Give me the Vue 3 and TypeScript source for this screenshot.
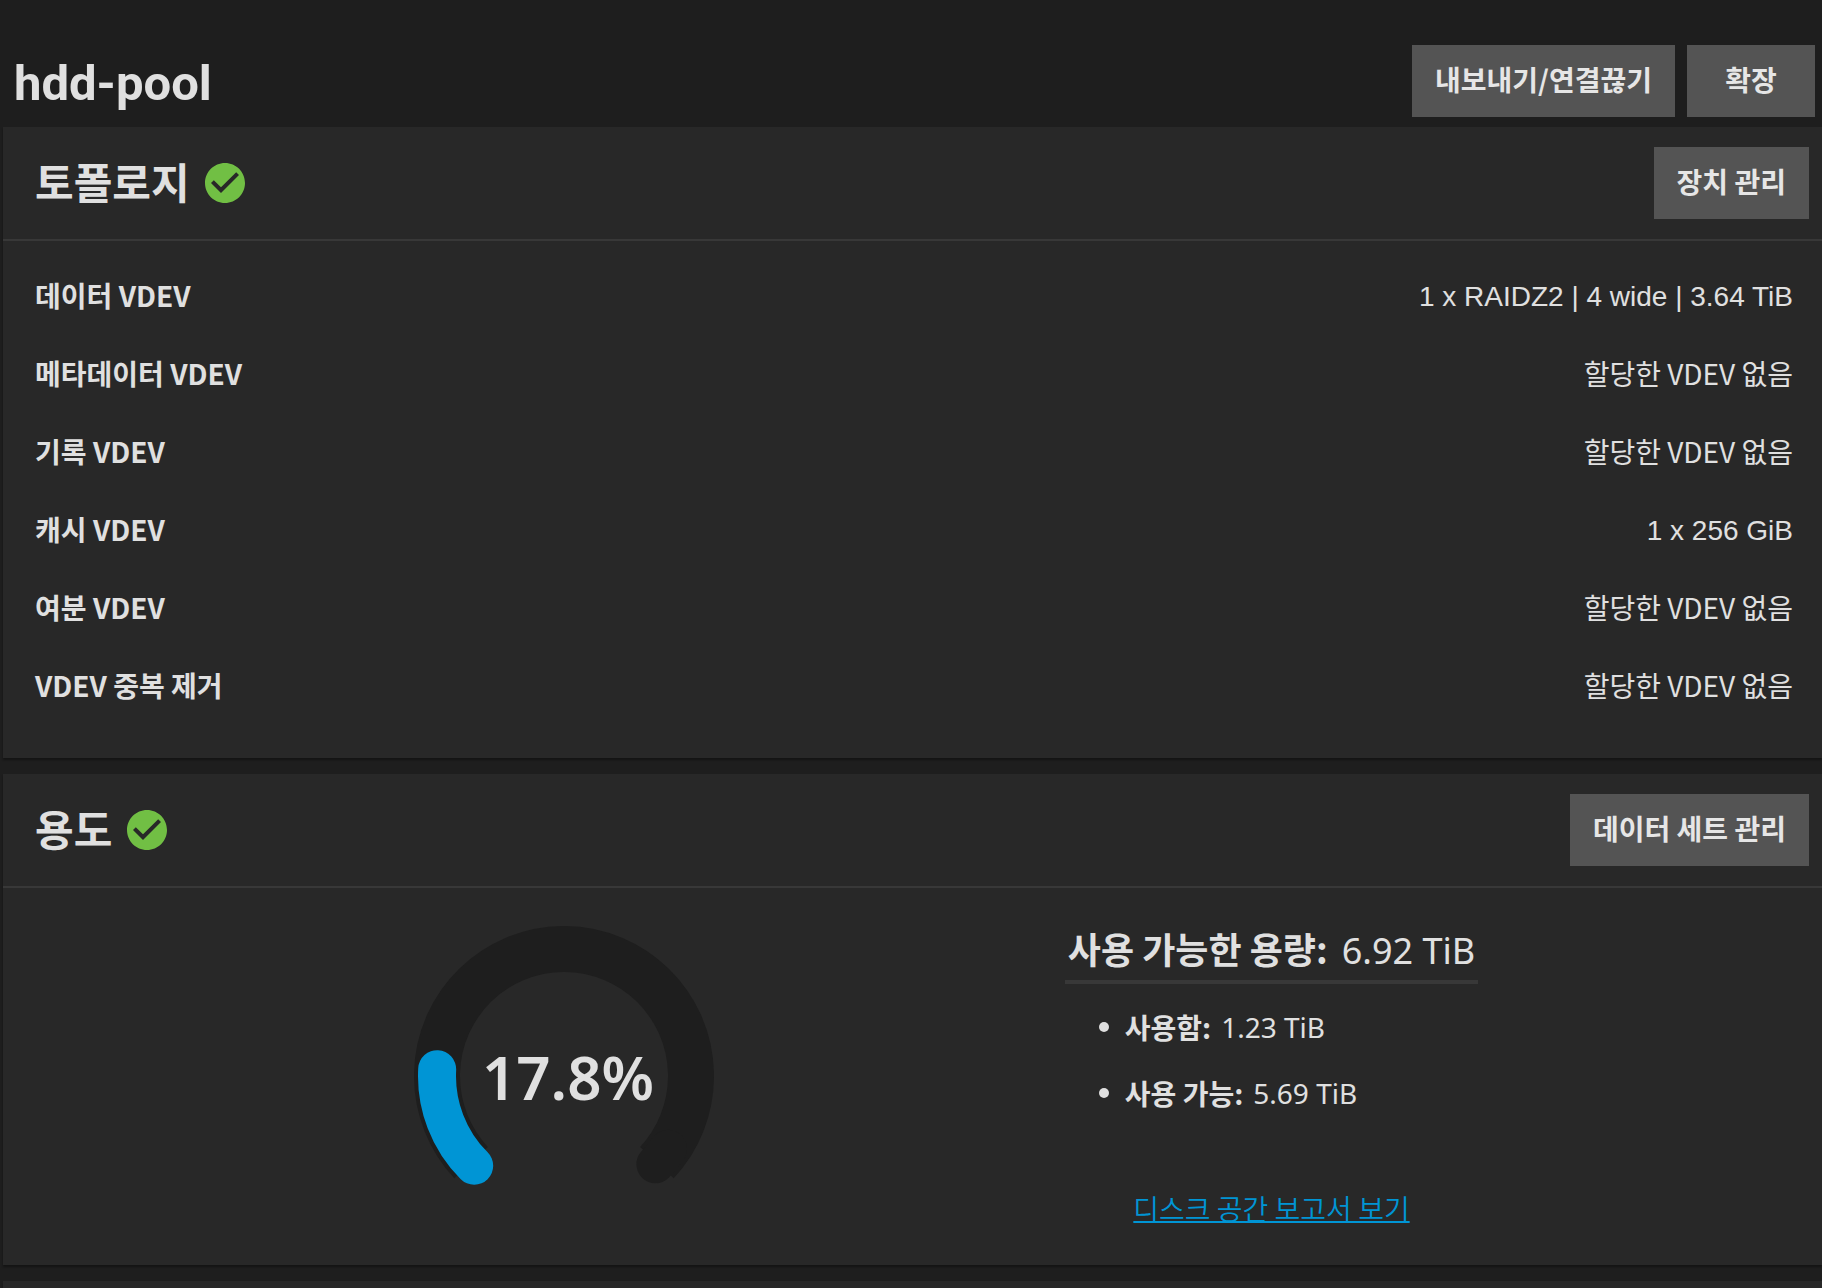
<script setup lang="ts">
import { computed } from 'vue'

interface VdevRow {
  label: string
  value: string
  assigned: boolean
}

const poolName = 'hdd-pool'

const vdevs: VdevRow[] = [
  { label: '데이터 VDEV', value: '1 x RAIDZ2 | 4 wide | 3.64 TiB', assigned: true },
  { label: '메타데이터 VDEV', value: '할당한 VDEV 없음', assigned: false },
  { label: '기록 VDEV', value: '할당한 VDEV 없음', assigned: false },
  { label: '캐시 VDEV', value: '1 x 256 GiB', assigned: true },
  { label: '여분 VDEV', value: '할당한 VDEV 없음', assigned: false },
  { label: 'VDEV 중복 제거', value: '할당한 VDEV 없음', assigned: false },
]

const usedPercent = 17.8

// Gauge geometry: 0deg points right, angles grow clockwise, 270deg sweep.
const centre = 150
const radius = 127

function arc(from: number, to: number): string {
  const point = (deg: number) => {
    const rad = (deg * Math.PI) / 180
    return `${(centre + radius * Math.cos(rad)).toFixed(2)} ${(centre + radius * Math.sin(rad)).toFixed(2)}`
  }
  return `M${point(from)}A${radius} ${radius} 0 ${to - from > 180 ? 1 : 0} 1 ${point(to)}`
}

const trackPath = arc(137, 403)
const trackCapPath = arc(395, 404)
const valuePath = computed(() => arc(135, 135 + (270 * usedPercent) / 100))
</script>

<template>
  <main class="page">
    <header class="pool-header">
      <h1>{{ poolName }}</h1>
      <div class="actions">
        <button type="button">내보내기/연결끊기</button>
        <button type="button">확장</button>
      </div>
    </header>

    <section class="card">
      <div class="card-header">
        <h2>토폴로지</h2>
        <svg class="status" viewBox="0 0 24 24" role="img" aria-label="정상">
          <path d="M12 2C6.48 2 2 6.48 2 12s4.48 10 10 10 10-4.48 10-10S17.52 2 12 2zm-2 15l-5-5 1.41-1.41L10 14.17l7.59-7.59L19 8l-9 9z" />
        </svg>
        <button type="button">장치 관리</button>
      </div>
      <dl class="vdevs">
        <div v-for="row in vdevs" :key="row.label" class="vdev">
          <dt>{{ row.label }}</dt>
          <dd :class="{ assigned: row.assigned }">{{ row.value }}</dd>
        </div>
      </dl>
    </section>

    <section class="card">
      <div class="card-header">
        <h2>용도</h2>
        <svg class="status" viewBox="0 0 24 24" role="img" aria-label="정상">
          <path d="M12 2C6.48 2 2 6.48 2 12s4.48 10 10 10 10-4.48 10-10S17.52 2 12 2zm-2 15l-5-5 1.41-1.41L10 14.17l7.59-7.59L19 8l-9 9z" />
        </svg>
        <button type="button">데이터 세트 관리</button>
      </div>
      <div class="usage">
        <svg class="gauge" viewBox="0 0 300 264">
          <path class="track" :d="trackPath" />
          <path class="track-cap" :d="trackCapPath" />
          <path class="value" :d="valuePath" />
          <text x="154" y="174" text-anchor="middle">{{ usedPercent }}%</text>
        </svg>
        <div class="capacity">
          <h3><strong>사용 가능한 용량:</strong><span>6.92 TiB</span></h3>
          <ul>
            <li><strong>사용함:</strong><span>1.23 TiB</span></li>
            <li><strong>사용 가능:</strong><span>5.69 TiB</span></li>
          </ul>
          <a href="#">디스크 공간 보고서 보기</a>
        </div>
      </div>
    </section>

    <section class="card next"></section>
  </main>
</template>

<style>
body {
  margin: 0;
  background: #1e1e1e;
}
</style>

<style scoped>
.page {
  box-sizing: border-box;
  display: flex;
  flex-direction: column;
  min-height: 100vh;
  background: #1e1e1e;
  color: #e0e0e0;
  font-family: "Noto Sans CJK KR", sans-serif;
  font-size: 28px;
  line-height: 40px;
}

h1,
h2,
h3,
dl,
dd,
ul {
  margin: 0;
  padding: 0;
}

.pool-header {
  display: flex;
  align-items: flex-end;
  justify-content: space-between;
  padding: 45px 7px 10px 14px;
}

h1 {
  font-family: Roboto, sans-serif;
  font-size: 49px;
  font-weight: 700;
  line-height: 66px;
}

.actions {
  display: flex;
  gap: 12px;
}

button {
  min-width: 128px;
  height: 72px;
  padding: 0 23px 4px;
  border: 0;
  background: #545454;
  color: #e6e6e6;
  font-family: "Noto Sans CJK KR", sans-serif;
  font-size: 28px;
  font-weight: 700;
  line-height: 40px;
  cursor: pointer;
}

.card {
  margin: 0 0 16px 3px;
  background: #282828;
  box-shadow: 0 2px 2px rgba(0, 0, 0, 0.35);
}

.next {
  flex: 1;
  margin-bottom: 0;
}

.card-header {
  display: flex;
  align-items: center;
  padding: 20px 13px 20px 32px;
  border-bottom: 2px solid #383838;
}

.card-header button {
  margin-left: auto;
}

h2 {
  padding-bottom: 5px;
  font-size: 42px;
  font-weight: 700;
  line-height: 60px;
}

.status {
  width: 48px;
  height: 48px;
  margin-left: 11px;
  fill: #71bf44;
}

.vdevs {
  padding: 15px 29px 34px 32px;
}

.vdev {
  display: flex;
  align-items: center;
  justify-content: space-between;
  height: 78px;
}

dt {
  font-weight: 700;
}

.assigned {
  padding-top: 4px;
  font-family: "Liberation Sans", Arial, sans-serif;
}

.usage {
  display: grid;
  grid-template-columns: 1fr 1fr;
  justify-items: center;
  max-width: 1416px;
  margin: 0 auto;
  padding: 38px 0 37px 10px;
}

.gauge {
  width: 300px;
  height: 264px;
}

.gauge path {
  fill: none;
}

.track {
  stroke: #1e1e1e;
  stroke-width: 46;
}

.track-cap {
  stroke: #1e1e1e;
  stroke-width: 38;
  stroke-linecap: round;
}

.value {
  stroke: #0095d5;
  stroke-width: 38;
  stroke-linecap: round;
}

.gauge text {
  fill: #e0e0e0;
  font-family: "Noto Sans", sans-serif;
  font-size: 60px;
  font-weight: 600;
}

.capacity {
  display: flex;
  flex-direction: column;
  align-items: center;
}

h3 {
  display: flex;
  align-items: baseline;
  gap: 14px;
  height: 44px;
  padding: 0 3px 10px;
  border-bottom: 4px solid #383838;
  font-size: 36px;
  font-weight: 400;
  line-height: 44px;
}

h3 span,
li span {
  font-family: "Noto Sans", sans-serif;
}

strong {
  font-weight: 700;
}

ul {
  align-self: stretch;
  margin-top: 10px;
  padding-left: 34px;
  list-style: none;
}

li {
  display: flex;
  align-items: center;
  gap: 10px;
  height: 66px;
}

li::before {
  content: "";
  width: 10px;
  height: 10px;
  margin-right: 6px;
  border-radius: 50%;
  background: #e0e0e0;
}

a {
  margin-top: 62px;
  color: #0095d5;
  font-weight: 350;
  text-decoration-thickness: 2px;
  text-underline-offset: 1px;
}
</style>
